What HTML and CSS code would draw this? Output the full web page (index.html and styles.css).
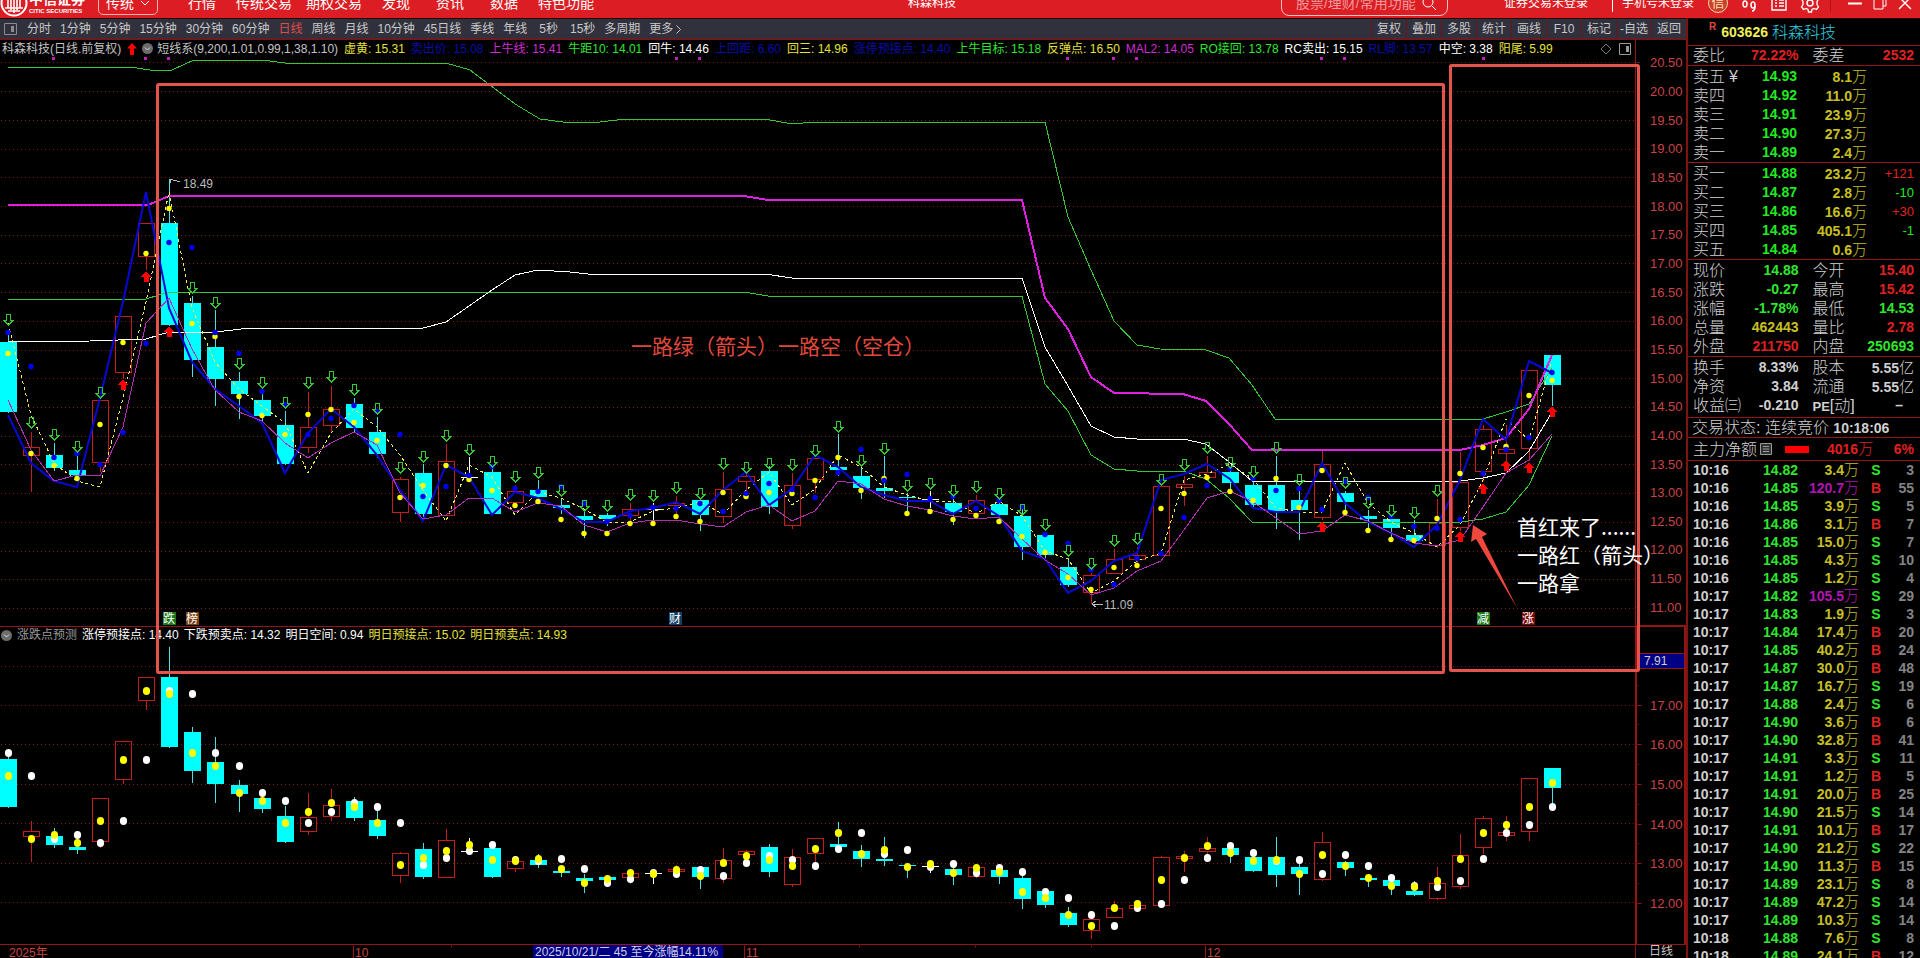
FILE: index.html
```html
<!DOCTYPE html>
<html lang="zh-CN">
<head>
<meta charset="utf-8">
<title>科森科技</title>
<link rel="stylesheet" href="styles.css">
</head>
<body>
<header class="titlebar">
  <div class="titlebar-row">
    <div class="brand">
      <svg class="brand-mark" width="28" height="28" viewBox="0 0 28 28"><circle cx="14" cy="14" r="12.5" fill="none" stroke="#fff" stroke-width="2"/><path d="M8 6v13M11 5v16M14 4v20M17 5v16M20 6v13M5 19h18M8 22h12" stroke="#fff" stroke-width="1.6" fill="none"/></svg>
      <div class="brand-text"><span class="brand-cn">中信证券</span><span class="brand-en">CITIC SECURITIES</span></div>
    </div>
    <button class="mode">传统<svg width="10" height="6" viewBox="0 0 10 6"><path d="M1 1l4 4 4-4" fill="none" stroke="#fff"/></svg></button>
    <nav class="menu">
      <button>行情</button><button class="long">传统交易</button><button class="long">期权交易</button><button>发现</button><button>资讯</button><button>数据</button><button class="long">特色功能</button>
    </nav>
    <span class="doc-title">科森科技</span>
    <label class="search"><input type="text" placeholder="股票/理财/常用功能" aria-label="搜索"><svg width="15" height="15" viewBox="0 0 15 15"><circle cx="6" cy="6" r="5" fill="none" stroke="#fff"/><path d="M10 10l4 4" stroke="#fff"/></svg></label>
    <div class="account">
      <button>证券交易未登录</button><i class="sep"></i><button>手机号未登录</button>
    </div>
    <div class="tools">
      <button class="credit">信</button>
      <button aria-label="客服"><svg width="18" height="18" viewBox="0 0 18 18"><path d="M5 3a8 8 0 0 1 8 0" fill="none" stroke="#fff" stroke-width="1.5"/><ellipse cx="5" cy="10" rx="2" ry="3" fill="none" stroke="#fff" stroke-width="1.5"/><ellipse cx="13" cy="11" rx="2" ry="3" fill="none" stroke="#fff" stroke-width="1.5"/><path d="M15 12q0 5-3 5" fill="none" stroke="#fff" stroke-width="1.5"/></svg></button>
      <button aria-label="列表"><svg width="18" height="18" viewBox="0 0 18 18"><path d="M2 2h14v14H2zM5 6h2M9 6h5M5 9h2M9 9h5M5 12h2M9 12h5" fill="none" stroke="#fff" stroke-width="1.4"/></svg></button>
      <button aria-label="设置"><svg width="20" height="20" viewBox="0 0 20 20"><circle cx="10" cy="10" r="3" fill="none" stroke="#fff" stroke-width="1.5"/><path d="M8.5 1h3l.5 2.500 2 1L16.500 3.500l2 2.500-1.500 2.500v3l1.500 2.500-2 2.500-2.500-1-2 1-.5 2.500h-3l-.5-2.500-2-1-2.500 1-2-2.500L3 11.500v-3L1.500 6l2-2.500 2.500 1 2-1z" fill="none" stroke="#fff" stroke-width="1.3"/></svg></button>
    </div>
    <i class="sep faint"></i>
    <div class="win">
      <button aria-label="最小化"><svg width="14" height="14" viewBox="0 0 14 14"><path d="M0 7.500h14" stroke="#fff" stroke-width="2"/></svg></button>
      <button aria-label="还原"><svg width="14" height="14" viewBox="0 0 14 14"><path d="M1 3.500h9v9.500H1zM4 3V1h9v9h-3" fill="none" stroke="#fff"/></svg></button>
      <button aria-label="关闭"><svg width="14" height="14" viewBox="0 0 14 14"><path d="M1 1l12 12M13 1L1 13" stroke="#fff" stroke-width="1.4"/></svg></button>
    </div>
  </div>
</header>

<main class="work">
  <section class="left">
    <div class="toolbar">
      <svg class="pane-icon" width="13" height="12" viewBox="0 0 13 12"><path d="M.5.5h12v11H.5z" fill="none" stroke="#8a8a92"/><path d="M7 3h3v6H7z" fill="#8a8a92"/></svg>
      <div class="periods">
        <button>分时</button><button>1分钟</button><button>5分钟</button><button>15分钟</button><button>30分钟</button><button>60分钟</button><button class="on">日线</button><button>周线</button><button>月线</button><button>10分钟</button><button>45日线</button><button>季线</button><button>年线</button><button class="wide">5秒</button><button>15秒</button><button>多周期</button><button>更多 <svg width="5" height="9" viewBox="0 0 5 9"><path d="M.5.5l4 4-4 4" fill="none" stroke="#c8c8c8"/></svg></button>
      </div>
      <div class="actions">
        <button>复权</button><button>叠加</button><button>多股</button><button>统计</button><button>画线</button><button>F10</button><button>标记</button><button>-自选</button><button>返回</button>
      </div>
    </div>

    <div class="charts">
      <div class="plot-col">
        <div class="info main-info">
          <span>科森科技(日线.前复权)</span>
          <svg class="up" width="10" height="12" viewBox="0 0 10 12"><path d="M5 0l5 5.500H7V12H3V5.500H0z" fill="#f00"/></svg>
          <svg width="11" height="11" viewBox="0 0 11 11"><circle cx="5.500" cy="5.500" r="5.500" fill="#6c6c6c"/><path d="M3 4.500l2.500 2.500L8 4.500" fill="none" stroke="#ddd"/></svg>
          <span class="tight">短线系(9,200,1.01,0.99,1,38,1.10)</span>
          <span class="y">虚黄: 15.31</span><span class="b">卖出价: 15.08</span><span class="m">上牛线: 15.41</span><span class="g">牛距10: 14.01</span><span class="w">回牛: 14.46</span><span class="b">上回距: 6.60</span><span class="y">回三: 14.96</span><span class="b">涨停预接点: 14.40</span><span class="g">上牛目标: 15.18</span><span class="y">反弹点: 16.50</span><span class="m">MAL2: 14.05</span><span class="g">RO接回: 13.78</span><span class="w">RC卖出: 15.15</span><span class="b">RL脚: 13.57</span><span class="w">中空: 3.38</span><span class="y">阳尾: 5.99</span>
          <svg class="pane-tools" width="32" height="12" viewBox="0 0 32 12"><path d="M6 1l5 5-5 5-5-5z" fill="none" stroke="#777"/><path d="M19.500.5h11v11h-11z" fill="none" stroke="#999"/><path d="M26 3h3v6h-3z" fill="#999"/></svg>
        </div>
        <svg class="plot main-plot" id="main"></svg>
        <div class="info sub-info">
          <svg width="11" height="11" viewBox="0 0 11 11"><circle cx="5.500" cy="5.500" r="5.500" fill="#6c6c6c"/><path d="M3 4.500l2.500 2.500L8 4.500" fill="none" stroke="#ddd"/></svg>
          <span class="dim">涨跌点预测</span><span class="w">涨停预接点: 14.40</span><span class="w">下跌预卖点: 14.32</span><span class="w">明日空间: 0.94</span><span class="y">明日预接点: 15.02</span><span class="y">明日预卖点: 14.93</span>
        </div>
        <svg class="plot sub-plot" id="sub"></svg>
        <svg class="time-axis" id="time"></svg>
      </div>
      <div class="axis-col">
        <div class="axis-head"></div>
        <svg class="plot main-plot" id="mainAxis"></svg>
        <div class="sub-axis"><svg class="plot" id="subAxis"></svg><span class="cursor-price">7.91</span></div>
        <div class="axis-foot">日线</div>
      </div>
      <svg class="notes" id="notes"></svg>
    </div>
  </section>

  <aside class="quote">
    <h1 class="stock"><sup>R</sup><b>603626</b><span>科森科技</span></h1>
    <div class="block one"><div class="pair"><span>委比</span><b class="r">72.22%</b><span>委差</span><b class="r">2532</b></div></div>
    <div class="block" id="asks"></div>
    <div class="block" id="bids"></div>
    <div class="block">
      <div class="pair"><span>现价</span><b class="g">14.88</b><span>今开</span><b class="r">15.40</b></div>
      <div class="pair"><span>涨跌</span><b class="g">-0.27</b><span>最高</span><b class="r">15.42</b></div>
      <div class="pair"><span>涨幅</span><b class="g">-1.78%</b><span>最低</span><b class="g">14.53</b></div>
      <div class="pair"><span>总量</span><b class="y">462443</b><span>量比</span><b class="r">2.78</b></div>
      <div class="pair"><span>外盘</span><b class="r">211750</b><span>内盘</span><b class="g">250693</b></div>
    </div>
    <div class="block basics">
      <div class="pair"><span>换手</span><b>8.33%</b><span>股本</span><b>5.55<i>亿</i></b></div>
      <div class="pair"><span>净资</span><b>3.84</b><span>流通</span><b>5.55<i>亿</i></b></div>
      <div class="pair"><span>收益㈢</span><b>-0.210</b><span class="pe"><b>PE</b>[动]</span><b class="dash">–</b></div>
    </div>
    <div class="block status">交易状态: 连续竞价 <b>10:18:06</b></div>
    <div class="block flow"><span>主力净额</span><svg width="12" height="12" viewBox="0 0 12 12"><path d="M.5.5h11v11H.5zM3 3.500h6M3 6h6M3 8.500h6" fill="#333" stroke="#999"/></svg><i class="bar"></i><b class="amount">4016<i>万</i></b><b>6%</b></div>
    <table class="ticks"><colgroup><col class="c-time"><col class="c-price"><col class="c-vol"><col class="c-side"><col></colgroup><tbody id="ticks"></tbody></table>
  </aside>
</main>
<script src="chart.js"></script>
</body>
</html>
```

FILE: styles.css
```css
* { box-sizing: border-box; }
html, body { height: 100%; }
body {
  margin: 0;
  display: flex;
  flex-direction: column;
  overflow: hidden;
  background: #000;
  color: #c4c4c4;
  font: 12px/16px "Liberation Sans", "Noto Sans CJK SC", sans-serif;
}
button {
  margin: 0; padding: 0; border: 0; background: none;
  color: inherit; font: inherit; white-space: nowrap;
}
i { font-style: normal; }
svg { display: block; flex: none; }

.titlebar {
  flex: none; height: 18px; overflow: hidden;
  display: flex; align-items: flex-end;
  background: #dc1e24; color: #fff;
}
.titlebar-row { flex: 1; height: 30px; display: flex; align-items: center; position: relative; }
.brand { width: 98px; display: flex; align-items: center; gap: 1px; }
.brand-text { display: flex; flex-direction: column; }
.brand-cn { font: bold 14px/16px "Noto Sans CJK SC", sans-serif; }
.brand-en { font-size: 6px; line-height: 10px; font-weight: bold; white-space: nowrap; }
.mode {
  width: 60px; height: 23px; font-size: 14px;
  display: flex; align-items: center; justify-content: center; gap: 6px;
  border: 1px solid #ffb0b0; border-radius: 5px;
}
.menu { display: flex; margin-left: 17px; font-size: 14px; }
.menu button { padding: 0 13px; }
.menu .long { padding: 0 7px; }
.doc-title { margin-left: auto; padding-right: 325px; }
.search {
  width: 167px; height: 26px; padding: 0 10px 0 14px;
  display: flex; align-items: center;
  border: 1px solid #ffc0c0; border-radius: 8px;
}
.search input {
  flex: 1; min-width: 0; padding: 0; border: 0; outline: 0; background: none;
  color: #fff; font: 14px/18px "Liberation Sans", "Noto Sans CJK SC", sans-serif;
}
.search input::placeholder { color: #f09a9c; opacity: 1; }
.account { display: flex; align-items: center; margin-left: 56px; }
.sep { width: 1px; height: 18px; margin: 0 9px 0 24px; background: #fff; }
.sep.faint { margin: 0 17px 0 10px; background: #b01418; }
.tools { display: flex; align-items: center; gap: 12px; margin-left: 14px; }
.credit { width: 20px; height: 20px; border-radius: 50%; border: 1px solid #ffd9a0; background: #c8402c; color: #ffe4b8; font-size: 13px; line-height: 18px; }
.win { display: flex; gap: 11px; padding-right: 8px; }

.work { flex: 1; min-height: 0; display: flex; }
.left { flex: 1; min-width: 0; display: flex; flex-direction: column; }

.toolbar {
  flex: none; height: 22px; display: flex; align-items: center;
  background: #31313d; color: #c8c8c8;
  border-top: 1px solid #240808; border-bottom: 2px solid #6c1c20;
}
.toolbar button { padding-top: 1px; }
.pane-icon { margin: 0 10px 0 4px; }
.periods { display: flex; gap: 9px; white-space: nowrap; }
.periods button { display: flex; align-items: center; gap: 3px; }
.periods .wide { padding: 1px 3px 0; }
.periods .on { color: #e04848; }
.actions { margin-left: auto; display: flex; align-self: stretch; }
.actions button { width: 35px; border-left: 1px solid #6c1418; }

.charts { flex: 1; min-height: 0; display: flex; position: relative; }
.plot-col { flex: 1; min-width: 0; display: flex; flex-direction: column; }
.axis-col { width: 51px; display: flex; flex-direction: column; }
.info { flex: none; display: flex; align-items: center; gap: 6px; white-space: nowrap; overflow: hidden; }
.main-info { height: 17px; padding-left: 2px; }
.main-info .up { margin: 0 -1px 0 0; }
.main-info .tight { margin-left: -2px; }
.pane-tools { margin: 0 3px 0 auto; }
.sub-info { height: 17px; gap: 5px; padding-left: 1px; border-top: 1px solid #961414; }
.dim { color: #9a9a9a; }
.plot { width: 100%; min-height: 0; overflow: hidden; }
.main-plot { flex: 569 1 0; height: 0; }
.sub-plot { flex: 301 1 0; height: 0; }
.time-axis { width: 100%; height: 14px; border-top: 1px solid #961414; }
.axis-head { height: 17px; border-left: 1px solid #961414; }
#mainAxis { border-left: 1px solid #961414; }
.sub-axis { flex: 318 1 0; min-height: 0; position: relative; border: 2px solid #961414; border-bottom-width: 1px; }
#subAxis { height: 100%; }
.cursor-price {
  position: absolute; left: 2px; right: 0; top: 26px; height: 16px; padding-left: 5px;
  line-height: 14px; background: #000084; border: solid #961414; border-width: 1px 0; color: #d0d0d0;
}
.axis-foot { height: 13px; line-height: 13px; text-align: center; border-left: 1px solid #961414; }
.notes { position: absolute; left: 0; top: 0; width: 100%; height: 100%; pointer-events: none; }
svg text { font-family: "Liberation Sans", "Noto Sans CJK SC", sans-serif; font-size: 12px; }
svg text.big { font-family: "Noto Sans CJK SC", sans-serif; font-size: 21px; }
svg text.price { fill: #c84444; font-size: 13px; }
svg .dots { shape-rendering: geometricPrecision; }

.r { color: #e02020; }
.g { color: #2ee62e; }
.y { color: #e6e03c; }
.b { color: #0c0ca8; }
.m { color: #d02cd0; }
.w { color: #fff; }
.p { color: #b414b4; }

.quote {
  flex: none; width: 234px; overflow: hidden;
  border-left: 2px solid #7c1414;
  border-top: 1px solid #240808;
  color: #d0d0d0;
  font-size: 16px; line-height: 19px; font-weight: 300;
}
.quote b { font-size: 14px; font-weight: bold; }
.quote b i { font-size: 15px; font-weight: 300; }
.stock { margin: 0; height: 26px; padding-left: 21px; display: flex; align-items: center; font-size: 16px; font-weight: 300; }
.stock sup { align-self: flex-start; font-size: 10px; line-height: 16px; font-weight: bold; color: #e04848; }
.stock b { margin: 0 4px 0 5px; color: #f0f05a; }
.stock span { color: #30d0e0; }
.block { border-top: 1px solid #961414; padding: 1px 6px 0 5px; white-space: nowrap; }
.block.one { padding-top: 0; height: 20px; }
.basics { padding-bottom: 2px; }
.pair { display: grid; grid-template-columns: 45px 1fr 55px 1fr; height: 19px; }
.pair > span:nth-child(3) { padding-left: 14px; }
.pair > b:nth-child(even) { text-align: right; justify-self: end; }
.pair .dash { padding-right: 11px; }
.pe b { font-size: 13px; }
.level { display: grid; grid-template-columns: 47px 57px 70px 1fr; height: 19px; }
.level > * { text-align: right; }
.level > :first-child { text-align: left; }
.level em { font-style: normal; font-size: 13px; }
.level small { margin-left: 4px; font-size: 16px; }
.level .y, #ticks .y, .pair .y { color: #c8c020; }
.level .g { color: #20ea20; }
.status { height: 20px; padding-top: 0; padding-left: 4px; line-height: 19px; }
.flow { height: 23px; padding-top: 0; display: flex; align-items: center; }
.flow b { color: #e02020; }
.flow svg { margin-left: 3px; }
.flow .bar { width: 24px; height: 7px; margin-left: 13px; background: #f00; }
.flow .amount { margin: 0 auto 0 18px; }
.ticks {
  width: 100%; border-collapse: collapse; table-layout: fixed;
  border-top: 1px solid #961414;
  font-size: 14px; font-weight: bold; line-height: 18px;
}
.ticks td { padding: 0; height: 18px; text-align: right; }
.ticks td:first-child { text-align: left; padding-left: 5px; }
.ticks td:nth-child(4) { text-align: center; }
.ticks td:last-child { padding-right: 6px; color: #848484; }
.ticks td i { font-size: 15px; line-height: 17px; font-weight: 300; }
.c-time { width: 60px; }
.c-price { width: 50px; }
.c-vol { width: 61px; }
.c-side { width: 34px; }
```

FILE: chart.js
```javascript
// Candles: kind (r rising, c falling, w flat), high, body top, body bottom, low.
const candles = `c333,342,412,412 r431,447,455,491 c442,455,468,470 c452,470,475,480 r400,400,462,471 r316,316,372,378 r223,223,256,269 c178,223,325,325 c295,303,360,376 c309,347,379,405 c371,381,394,418 c393,400,416,420 c410,425,464,464 r391,427,447,452 r385,409,425,432 c397,404,428,432 c416,432,454,457 r476,479,512,521 c463,473,514,516 r443,461,515,515 w456,477,477,479 c468,472,514,514 r484,491,502,505 c479,490,497,500 c497,505,508,513 c509,516,520,537 c512,515,519,525 r502,509,515,523 w502,509,509,523 r495,503,505,513 c500,500,515,530 r471,489,516,522 r473,476,481,495 c465,471,507,513 r472,485,525,528 r458,458,479,492 c433,467,470,475 c467,476,488,498 c455,488,491,497 c492,497,498,514 w490,499,499,507 c495,503,512,524 r494,500,513,514 c498,504,515,523 c504,516,547,559 c533,535,555,558 c557,567,585,586 r572,575,592,603 r548,559,573,573 r546,555,559,563 r483,486,555,555 r475,484,487,505 r455,472,477,479 c465,472,483,492 c480,485,505,506 c455,485,511,528 c490,500,510,539 r448,464,517,519 c490,493,502,511 c509,516,519,527 c515,519,528,539 c519,535,541,541 r498,523,545,547 r451,482,527,530 r424,429,471,480 r424,449,453,461 r370,370,448,460 c355,355,385,405`
  .split(' ').map(s => ({ kind: s[0], v: s.slice(1).split(',').map(Number) }));

const yellowDots = [353,453,465,478,424,342,253,208,323,336,396,415,434,414,409,422,440,497,485,465,479,490,505,501,519,533,533,523,523,516,521,492,496,492,493,480,457,490,478,513,511,519,515,521,536,552,577,589,567,565,508,493,477,491,500,478,507,470,512,530,539,540,518,473,447,446,395,380];
const blueDots = [332,366,457,453,464,432,343,242,247,332,353,391,404,434,418,405,411,434,496,486,475,466,488,491,486,503,521,515,507,508,503,511,493,483,489,497,472,449,480,474,498,496,508,500,506,534,543,569,584,558,553,517,485,468,478,490,488,509,481,497,516,526,528,519,473,449,437,372];
const forecast = [776,839,835,843,821,760,691,694,753,766,793,801,823,812,803,807,823,865,858,851,845,860,861,859,869,883,879,873,874,870,876,863,856,860,866,849,833,854,850,867,864,873,868,872,892,898,915,926,908,904,880,858,846,853,861,860,874,855,866,878,886,887,881,859,833,825,807,783];
const blueLine = [415,463,481,487,398,302,192,308,362,389,406,423,473,433,409,427,455,490,521,465,477,515,492,498,509,522,522,511,508,502,514,490,472,505,489,455,467,487,495,501,501,514,501,516,551,559,593,581,561,553,480,474,464,479,508,512,512,463,503,522,533,547,525,480,419,440,361,373];
const mal2 = [400,450,481,475,476,427,323,298,349,390,412,421,443,458,443,432,445,493,519,515,498,498,512,503,506,525,532,523,520,520,524,527,512,505,521,511,481,484,499,506,510,516,519,517,539,560,574,595,588,571,561,530,498,491,502,518,534,531,515,521,533,543,546,540,507,473,460,434];

const bands = [
  ['#34c834', 1, '8,67 130,67 150,70 172,70 194,60 262,60 285,63 446,63 470,70 515,104 540,119 563,122 600,122 625,119 765,119 792,124 815,122 1045,122 1068,217 1091,270 1114,321 1137,345 1160,349 1206,350 1229,358 1252,385 1275,419 1483,419 1506,412 1529,404 1552,368'],
  ['#34c834', 1, '8,299 146,299 169,292 744,292 768,296 1022,296 1045,384 1068,411 1091,455 1114,469 1137,471 1183,471 1206,479 1229,498 1252,522 1460,522 1483,519 1506,512 1529,485 1552,436'],
  ['#fff', 1, '8,342 90,341 146,339 169,332 216,332 250,328 423,328 446,322 492,290 515,275 538,270 570,272 588,274 765,274 792,278 1022,278 1045,347 1068,386 1091,426 1114,437 1137,439 1183,439 1206,444 1229,462 1252,481 1460,481 1483,478 1506,473 1529,451 1552,412'],
  ['#e020e0', 2, '8,205 148,205 169,196 744,196 768,200 1022,200 1045,298 1068,329 1091,377 1114,393 1183,394 1206,401 1229,424 1252,450 1460,450 1483,445 1506,438 1529,409 1552,355'],
];

const downArrows = {0:319,1:422,2:434,3:446,4:392,8:287,9:302,10:363,11:382,12:402,13:382,14:376,15:389,16:408,17:467,18:456,19:435,20:449,21:461,22:476,23:472,24:490,25:505,26:505,27:494,28:495,29:487,30:493,31:463,32:467,33:463,34:464,35:450,36:426,37:460,38:448,39:485,40:483,41:490,42:486,43:493,44:509,45:524,46:550,47:563,48:540,49:538,50:479,51:464,52:447,53:462,54:471,55:447,56:479,58:482,59:502,60:510,61:512,62:490};
const upArrows = {5:385,6:277,7:332,57:527,63:537,64:489,65:466,66:468,67:412};

const el = id => document.getElementById(id);
const slot = i => 8 + 23.05 * i;
const mainY = p => 608 - 57.43 * (p - 11);
const subY = p => 902 - 39.4 * (p - 12);
const toSub = y => subY(11 + (608.3 - y) / 57.43);

function scales(svg, w, top, h) {
  const box = svg.getBoundingClientRect();
  return { X: v => Math.round(v * box.width / w), Y: v => Math.round((v - top) * box.height / h) };
}
const seg = (x1, y1, x2, y2, c, extra = '') => `<path d="M${x1 + .5} ${y1 + .5}L${x2 + .5} ${y2 + .5}" stroke="${c}" fill="none" ${extra}/>`;
const text = (x, y, t, fill, cls = '') => `<text x="${x}" y="${y}" fill="${fill}" class="${cls}">${t}</text>`;

function drawCandles(X, Y, map) {
  return candles.map((c, i) => {
    const x = X(slot(i)), [h, t, b, l] = c.v.map(v => Y(map(v)));
    const col = { r: '#c41c1c', c: '#00ffff', w: '#ffffff' }[c.kind];
    const wick = c.kind === 'c' ? '#48e0e0' : col;
    const body = c.kind === 'r'
      ? `<rect x="${x - 7.5}" y="${t + .5}" width="16" height="${Math.max(b - t, 2)}" fill="none" stroke="${col}"/>`
      : `<rect x="${x - 8}" y="${t}" width="17" height="${Math.max(b - t, 1)}" fill="${col}"/>`;
    return (c.kind === 'r' ? seg(x, h, x, t, wick) + seg(x, b, x, l, wick) : seg(x, h, x, l, wick)) + body;
  }).join('');
}

function drawMain() {
  const svg = el('main'), { X, Y } = scales(svg, 1635, 57, 569);
  const poly = (pts, c, w, extra = '') => `<polyline points="${pts.map(p => X(p[0]) + ',' + Y(p[1])).join(' ')}" fill="none" stroke="${c}" stroke-width="${w}" ${extra}/>`;
  let out = '';
  for (let p = 11; p <= 20.5; p += .5) out += seg(0, Y(mainY(p)), X(1635), Y(mainY(p)), '#7c1818', 'stroke-dasharray="1 3"');
  out += drawCandles(X, Y, v => v);
  bands.forEach(([c, w, pts]) => { out += poly(pts.split(' ').map(p => p.split(',').map(Number)), c, w); });
  out += poly([323, ...blueLine.slice(0, -1)].map((y, i) => [slot(i), y]), '#f0f050', 1, 'stroke-dasharray="3 3"');
  out += poly(blueLine.map((y, i) => [slot(i), y]), '#0808d4', 2, 'class="dots"');
  out += poly(mal2.map((y, i) => [slot(i), y]), '#b030b0', 1);
  out += '<g class="dots">';
  candles.forEach((c, i) => {
    const x = X(slot(i));
    out += `<circle cx="${x}" cy="${Y(yellowDots[i]) + .5}" r="2.7" fill="#ff0"/><circle cx="${x}" cy="${Y(blueDots[i]) + .5}" r="2.7" fill="#0000f0"/>`;
  });
  out += '</g>';
  Object.entries(downArrows).forEach(([i, y]) => { out += `<path transform="translate(${X(slot(+i))} ${Y(y)})" d="M-1.500-5h4V1h3L.5 6-4.500 1h3z" fill="none" stroke="#34c834"/>`; });
  Object.entries(upArrows).forEach(([i, y]) => { out += `<path transform="translate(${X(slot(+i))} ${Y(y)})" d="M0-6l5 6H2.500v5h-5V0H-5z" fill="#f00"/>`; });
  [53,145,168,676,699,1067,1113,1136,1321,1344,1483].forEach(x => { out += `<rect x="${X(x) - 1}" y="0" width="3" height="3" fill="#c020c0"/>`; });
  out += `<path d="M${X(180)} ${Y(182)}l-10-3m0 4v-4h3" fill="none" stroke="#bbb"/>` + text(X(183), Y(188), '18.49', '#bcbcbc');
  out += `<path d="M${X(1103)} ${Y(604)}h-11m4-3l-4 3 4 3" fill="none" stroke="#bbb"/>` + text(X(1104), Y(609), '11.09', '#bcbcbc');
  [[169,'跌','#187818'],[192,'榜','#7c4010'],[675,'财','#103c68'],[1483,'减','#187818'],[1528,'涨','#780808']].forEach(([x, t, c]) => {
    out += `<rect x="${X(x) - 6}" y="${Y(612)}" width="13" height="13" fill="${c}"/>` + text(X(x) - 6, Y(623), t, '#fff');
  });
  svg.innerHTML = `<g shape-rendering="crispEdges">${out}</g>`;

  const axis = el('mainAxis'), a = scales(axis, 51, 57, 569);
  out = '';
  for (let p = 11; p <= 20.5; p += .5) {
    const y = a.Y(mainY(p));
    out += seg(0, y, 3, y, '#961414') + text(14, y + 5, p.toFixed(2), '#c84444', 'price');
  }
  axis.innerHTML = out;
}

function drawSub() {
  const svg = el('sub'), { X, Y } = scales(svg, 1635, 643, 301);
  let out = '';
  for (let p = 12; p <= 18; p++) out += seg(0, Y(subY(p)), X(1635), Y(subY(p)), '#7c1818', 'stroke-dasharray="1 3"');
  out += drawCandles(X, Y, toSub);
  const dot = (i, y, c) => `<ellipse class="dots" cx="${X(slot(i)) + .5}" cy="${Y(y)}" rx="3.6" ry="4" fill="${c}"/>`;
  candles.forEach((c, i) => { out += dot(i, i ? forecast[i - 1] : 753, '#fff') + dot(i, forecast[i], '#ff0'); });
  svg.innerHTML = `<g shape-rendering="crispEdges">${out}</g>`;

  const axis = el('subAxis'), a = scales(axis, 47, 628, 315);
  out = '';
  for (let p = 12; p <= 17; p++) {
    const y = a.Y(subY(p));
    out += seg(0, y, 4, y, '#961414') + seg(0, a.Y(subY(p + .5)), 1, a.Y(subY(p + .5)), '#961414') + text(13, y + 5, p.toFixed(2), '#c84444', 'price');
  }
  axis.innerHTML = out;
}

function drawTime() {
  const svg = el('time'), { X } = scales(svg, 1635, 0, 13);
  let out = text(X(9), 12, '2025年', '#c84444');
  [[353,'10'],[744,'11'],[1205,'12']].forEach(([x, t]) => { out += seg(X(x), 0, X(x), 13, '#961414') + text(X(x) + 2, 12, t, '#c84444'); });
  [451,859,975,1091].forEach(x => { out += seg(X(x), 0, X(x), 2, '#961414'); });
  out += `<rect x="${X(533)}" y="0" width="190" height="13" fill="#000084"/>` + text(X(533) + 2, 11, '2025/10/21/二 45 至今涨幅14.11%', '#d0d0e8');
  svg.innerHTML = out;
}

function drawNotes() {
  const svg = el('notes'), { X, Y } = scales(svg, 1686, 40, 918);
  const frame = (x1, y1, x2, y2) => `<rect x="${X(x1) + .5}" y="${Y(y1) + .5}" width="${X(x2) - X(x1)}" height="${Y(y2) - Y(y1)}" rx="1" fill="none" stroke="#e2544c" stroke-width="3"/>`;
  const pts = [[1473,525],[1487,534],[1482,537],[1517,608],[1476,539],[1471,542]];
  svg.innerHTML = frame(157, 84, 1443, 672) + frame(1450, 65, 1638, 670)
    + `<polygon points="${pts.map(p => X(p[0]) + ',' + Y(p[1])).join(' ')}" fill="#f0483c"/>`
    + text(X(631), Y(354), '一路绿（箭头）一路空（空仓）', '#e0483c', 'big')
    + text(X(1517), Y(535), '首红来了......', '#fff', 'big')
    + text(X(1517), Y(563), '一路红（箭头）', '#fff', 'big')
    + text(X(1517), Y(591), '一路拿', '#fff', 'big');
}

function fillQuotes() {
  const unit = v => v.replace('万', '<i>万</i>');
  const level = ([n, p, v, d = '']) => `<div class="level"><span>${n}</span><b class="g">${p}</b><b class="y">${unit(v)}</b><em class="${d[0] === '+' ? 'r' : 'g'}">${d}</em></div>`;
  el('asks').innerHTML = [['卖五<small>¥</small>','14.93','8.1万'],['卖四','14.92','11.0万'],['卖三','14.91','23.9万'],['卖二','14.90','27.3万'],['卖一','14.89','2.4万']].map(level).join('');
  el('bids').innerHTML = [['买一','14.88','23.2万','+121'],['买二','14.87','2.8万','-10'],['买三','14.86','16.6万','+30'],['买四','14.85','405.1万','-1'],['买五','14.84','0.6万']].map(level).join('');
  const rows = `16 14.82 3.4 S 3|16 14.85 120.7 B 55|16 14.85 3.9 S 5|16 14.86 3.1 B 7|16 14.85 15.0 S 7|16 14.85 4.3 S 10|16 14.85 1.2 S 4|17 14.82 105.5 S 29|17 14.83 1.9 S 3|17 14.84 17.4 B 20|17 14.85 40.2 B 24|17 14.87 30.0 B 48|17 14.87 16.7 S 19|17 14.88 2.4 S 6|17 14.90 3.6 B 6|17 14.90 32.8 B 41|17 14.91 3.3 S 11|17 14.91 1.2 B 5|17 14.91 20.0 B 25|17 14.90 21.5 S 14|17 14.91 10.1 B 17|17 14.90 21.2 S 22|17 14.90 11.3 B 15|17 14.89 23.1 S 8|17 14.89 47.2 S 14|17 14.89 10.3 S 14|18 14.88 7.6 S 8|18 14.89 24.1 B 12`;
  el('ticks').innerHTML = rows.split('|').map(r => {
    const [m, p, v, s, n] = r.split(' ');
    return `<tr><td>10:${m}</td><td class="g">${p}</td><td class="${+v > 100 ? 'p' : 'y'}">${v}<i>万</i></td><td class="${s === 'B' ? 'r' : 'g'}">${s}</td><td>${n}</td></tr>`;
  }).join('');
}

function draw() { drawMain(); drawSub(); drawTime(); drawNotes(); }
fillQuotes();
draw();
window.addEventListener('resize', draw);
```
